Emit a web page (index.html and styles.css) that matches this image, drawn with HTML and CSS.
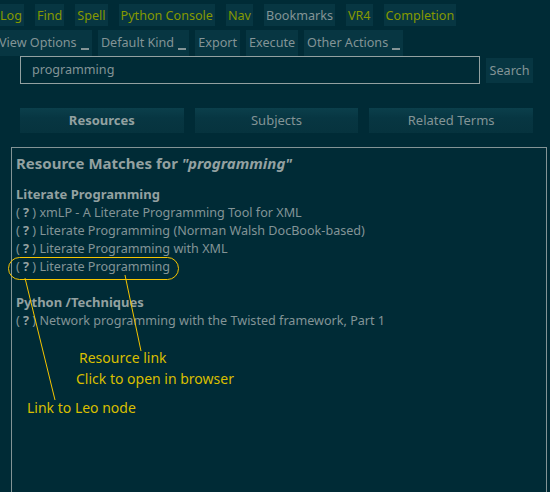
FILE: index.html
```html
<!DOCTYPE html>
<html>
<head>
<meta charset="utf-8">
<link rel="stylesheet" href="styles.css">
</head>
<body>
<div class="page">
  <div class="toolbar row1">
    <span class="btn g">Log</span>
    <span class="btn g">Find</span>
    <span class="btn g">Spell</span>
    <span class="btn g">Python Console</span>
    <span class="btn g">Nav</span>
    <span class="btn">Bookmarks</span>
    <span class="btn g">VR4</span>
    <span class="btn g">Completion</span>
  </div>
  <div class="toolbar row2">
    <span class="btn first">View Options <span class="dd"></span></span>
    <span class="btn">Default Kind <span class="dd"></span></span>
    <span class="btn">Export</span>
    <span class="btn">Execute</span>
    <span class="btn">Other Actions <span class="dd"></span></span>
  </div>
  <div class="search-row">
    <div class="search-box">programming</div>
    <span class="search-btn">Search</span>
  </div>
  <div class="tabs">
    <div class="tab active">Resources</div>
    <div class="tab">Subjects</div>
    <div class="tab">Related Terms</div>
  </div>
  <div class="panel">
    <div class="heading">Resource Matches for <i>"programming"</i></div>
    <div class="group">
      <div class="group-title">Literate Programming</div>
      <div class="item">( <b>?</b> ) xmLP - A Literate Programming Tool for XML</div>
      <div class="item">( <b>?</b> ) Literate Programming (Norman Walsh DocBook-based)</div>
      <div class="item">( <b>?</b> ) Literate Programming with XML</div>
      <div class="item">( <b>?</b> ) Literate Programming</div>
    </div>
    <div class="group">
      <div class="group-title">Python /Techniques</div>
      <div class="item">( <b>?</b> ) Network programming with the Twisted framework, Part 1</div>
    </div>
  </div>
</div>
<svg class="overlay" width="550" height="492" viewBox="0 0 550 492">
  <rect x="8.5" y="257.5" width="170" height="22" rx="11" ry="11" fill="none" stroke="#f5c400" stroke-width="1"/>
  <line x1="25" y1="278" x2="55" y2="400" stroke="#f5c400" stroke-width="1"/>
  <line x1="125" y1="275" x2="141" y2="351" stroke="#f5c400" stroke-width="1"/>
</svg>
<div class="note note1">Resource link</div>
<div class="note note2">Click to open in browser</div>
<div class="note note3">Link to Leo node</div>
</body>
</html>
```
FILE: styles.css
```css
html, body {
  margin: 0;
  padding: 0;
  background: #002b36;
  width: 550px;
  height: 492px;
  overflow: hidden;
  font-family: "Noto Sans", "Open Sans", sans-serif;
  font-size: 12.6px;
  color: #839496;
}
.page {
  position: relative;
  padding-top: 4px;
  height: 488px;
  overflow: hidden;
}
.toolbar {
  display: flex;
  white-space: nowrap;
}
.row1 {
  gap: 11px;
  margin-left: -2px;
  height: 22px;
}
.row2 {
  gap: 6px;
  margin-left: -4px;
  margin-top: 4px;
  height: 26px;
}
.btn {
  display: inline-block;
  padding: 0 2px;
  line-height: 23px;
  height: 22px;
  background: #073642;
  color: #839496;
}
.row2 .btn {
  height: 26px;
  line-height: 25px;
  padding: 0 3px;
}
.btn.g {
  color: #859900;
}
.dd {
  display: inline-block;
  width: 8px;
  height: 2px;
  background: #839496;
  vertical-align: -3px;
  margin-left: 1px;
}
.search-row {
  display: flex;
  align-items: center;
  margin-left: 20px;
  gap: 6px;
}
.search-box {
  width: 447px;
  height: 26px;
  border: 1px solid #93a1a1;
  padding: 0 0 0 11px;
  line-height: 26px;
  color: #839496;
}
.search-btn {
  display: inline-block;
  width: 47px;
  height: 25px;
  line-height: 25px;
  text-align: center;
  background: #073642;
  color: #839496;
}
.tabs {
  display: grid;
  grid-template-columns: 1fr 1fr 1fr;
  gap: 11px;
  margin: 24px 0 0 20px;
  width: 513px;
}
.tab {
  height: 25px;
  line-height: 25px;
  text-align: center;
  font-size: 13px;
  background: linear-gradient(#0b3f4b, #073642 40%, #06333e);
  color: #839496;
}
.tab.active {
  font-weight: bold;
  color: #93a1a1;
}
.panel {
  margin: 14px 0 0 11px;
  width: 536px;
  height: 346px;
  border: 1px solid #839496;
  padding: 5px 0 0 4px;
  box-sizing: border-box;
}
.heading {
  font-size: 15px;
  font-weight: bold;
  line-height: 21px;
  color: #93a1a1;
  margin-bottom: 11px;
}
.group {
  line-height: 18px;
  margin-bottom: 17px;
}
.group-title {
  font-weight: bold;
  font-size: 13px;
  line-height: 19px;
  color: #93a1a1;
}
.item b {
  color: #93a1a1;
}
.overlay {
  position: absolute;
  left: 0;
  top: 0;
  pointer-events: none;
}
.note {
  position: absolute;
  font-size: 14px;
  line-height: 18px;
  color: #d9bf00;
  white-space: nowrap;
}
.note1 { left: 79px; top: 349px; }
.note2 { left: 76px; top: 370px; }
.note3 { left: 27px; top: 399px; }
```
